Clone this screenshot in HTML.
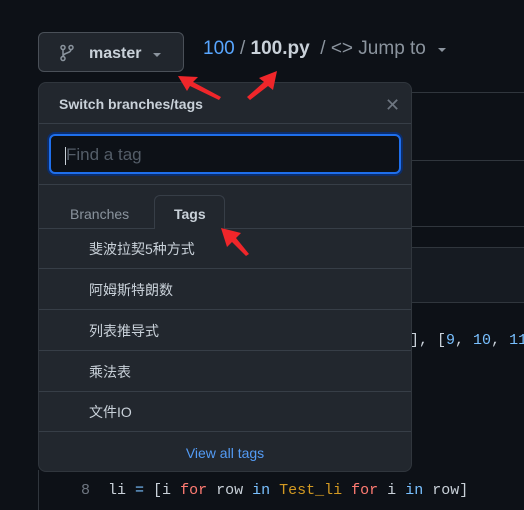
<!DOCTYPE html>
<html><head><meta charset="utf-8"><style>
*{box-sizing:border-box;margin:0;padding:0}
body{width:524px;height:503px;background:#0d1117;position:relative;overflow:hidden;font-family:"Liberation Sans","Noto Sans CJK SC",sans-serif;color:#c9d1d9}
.abs{position:absolute}
.hl{position:absolute;left:412px;right:0;height:1px;background:#30363d}
.btn{left:38px;top:32px;width:146px;height:40px;border:1px solid #4a5058;border-radius:6px;background:#21262d}
.dd{left:38px;top:82px;width:374px;height:390px;background:#22272e;border:1px solid #30363d;border-radius:8px;overflow:hidden}
.sep{position:absolute;left:0;right:0;height:1px;background:#373e47}
.item{position:absolute;left:50px;font-size:14px;color:#c9d1d9}
.mono{font-family:"Liberation Mono",monospace;font-size:15px}
</style></head><body>
<div class="hl" style="top:92px"></div>
<div class="hl" style="top:160px"></div>
<div class="hl" style="top:226px"></div>
<div class="abs" style="left:412px;right:0;top:247px;height:56px;background:#161b22;border-top:1px solid #30363d;border-bottom:1px solid #30363d"></div>
<div class="abs" style="left:38px;top:470px;width:1px;height:40px;background:#30363d"></div>
<div class="abs mono" style="left:410px;top:332px;color:#79c0ff;white-space:nowrap"><span style="color:#c9d1d9">], [</span>9<span style="color:#c9d1d9">, </span>10<span style="color:#c9d1d9">, </span>11<span style="color:#c9d1d9">,</span></div>
<div class="abs mono" style="left:81px;top:482px;white-space:nowrap;color:#c9d1d9"><span style="color:#6e7681">8</span>&nbsp;&nbsp;li <span style="color:#79c0ff">=</span> [i <span style="color:#ff7b72">for</span> row <span style="color:#79c0ff">in</span> <span style="color:#d29922">Test_li</span> <span style="color:#ff7b72">for</span> i <span style="color:#79c0ff">in</span> row]</div>

<div class="abs btn">
<svg class="abs" style="left:20px;top:11px" width="16" height="18" viewBox="0 0 16 18" fill="none" stroke="#8b949e" stroke-width="1.5"><circle cx="4" cy="3.5" r="2"/><circle cx="4" cy="14.5" r="2"/><circle cx="12" cy="3.5" r="2"/><path d="M4 5.5v7M12 5.5c0 4-8 3-8 7"/></svg>
<div class="abs" style="left:50px;top:12px;font-size:16px;font-weight:bold;color:#c9d1d9">master</div>
<div class="abs" style="left:114px;top:20px;width:0;height:0;border-left:4px solid transparent;border-right:4px solid transparent;border-top:4px solid #8b949e"></div>
</div>
<div class="abs" style="left:203px;top:38px;font-size:19px;white-space:nowrap"><span style="color:#58a6ff">100</span> <span style="color:#8b949e">/</span> <b style="color:#c9d1d9">100.py</b> &nbsp;<span style="color:#8b949e">/ &lt;&gt; Jump to</span></div>
<div class="abs" style="left:438px;top:48px;border-left:4px solid transparent;border-right:4px solid transparent;border-top:4px solid #8b949e"></div>

<div class="abs dd">
<div class="abs" style="left:20px;top:13px;font-size:14px;font-weight:bold;color:#c9d1d9">Switch branches/tags</div>
<div class="abs" style="left:346px;top:12px;font-size:18px;color:#6e7681">✕</div>
<div class="sep" style="top:40px"></div>
<div class="abs" style="left:10px;top:51px;width:352px;height:40px;border:2px solid #1f6feb;border-radius:6px;background:#0d1117;box-shadow:0 0 0 2px #0c2d6b"></div>
<div class="abs" style="left:26px;top:64px;width:1px;height:18px;background:#c9d1d9"></div>
<div class="abs" style="left:27px;top:62px;font-size:17px;color:#545d68">Find a tag</div>
<div class="sep" style="top:101px"></div>
<div class="abs" style="left:115px;top:112px;width:71px;height:34px;border:1px solid #373e47;border-bottom:none;border-radius:6px 6px 0 0;background:#22272e"></div>
<div class="abs" style="left:31px;top:123px;font-size:14px;color:#8b949e">Branches</div>
<div class="abs" style="left:135px;top:123px;font-size:14px;font-weight:bold;color:#c9d1d9">Tags</div>
<div class="sep" style="top:145px;left:0;width:115px"></div>
<div class="sep" style="top:145px;left:186px"></div>
<div class="item" style="top:156px">斐波拉契5种方式</div>
<div class="sep" style="top:185px"></div>
<div class="item" style="top:197px">阿姆斯特朗数</div>
<div class="sep" style="top:226px"></div>
<div class="item" style="top:238px">列表推导式</div>
<div class="sep" style="top:267px"></div>
<div class="item" style="top:279px">乘法表</div>
<div class="sep" style="top:308px"></div>
<div class="item" style="top:319px">文件IO</div>
<div class="sep" style="top:348px"></div>
<div class="abs" style="left:0;right:0;top:362px;text-align:center;font-size:14px;color:#539bf5">View all tags</div>
</div>

<svg class="abs" style="left:0;top:0" width="524" height="503">
<g fill="#f0262a">
<polygon points="178,76 198,77 193,82 221,97 219,100 190,86 187,91"/>
<polygon points="277,71 273,90 268,86 250,100 247,97 264,82 259,78"/>
<polygon points="221,228 241,233 236,238 249,254 246,256 232,242 227,247"/>
</g>
</svg>
</body></html>
